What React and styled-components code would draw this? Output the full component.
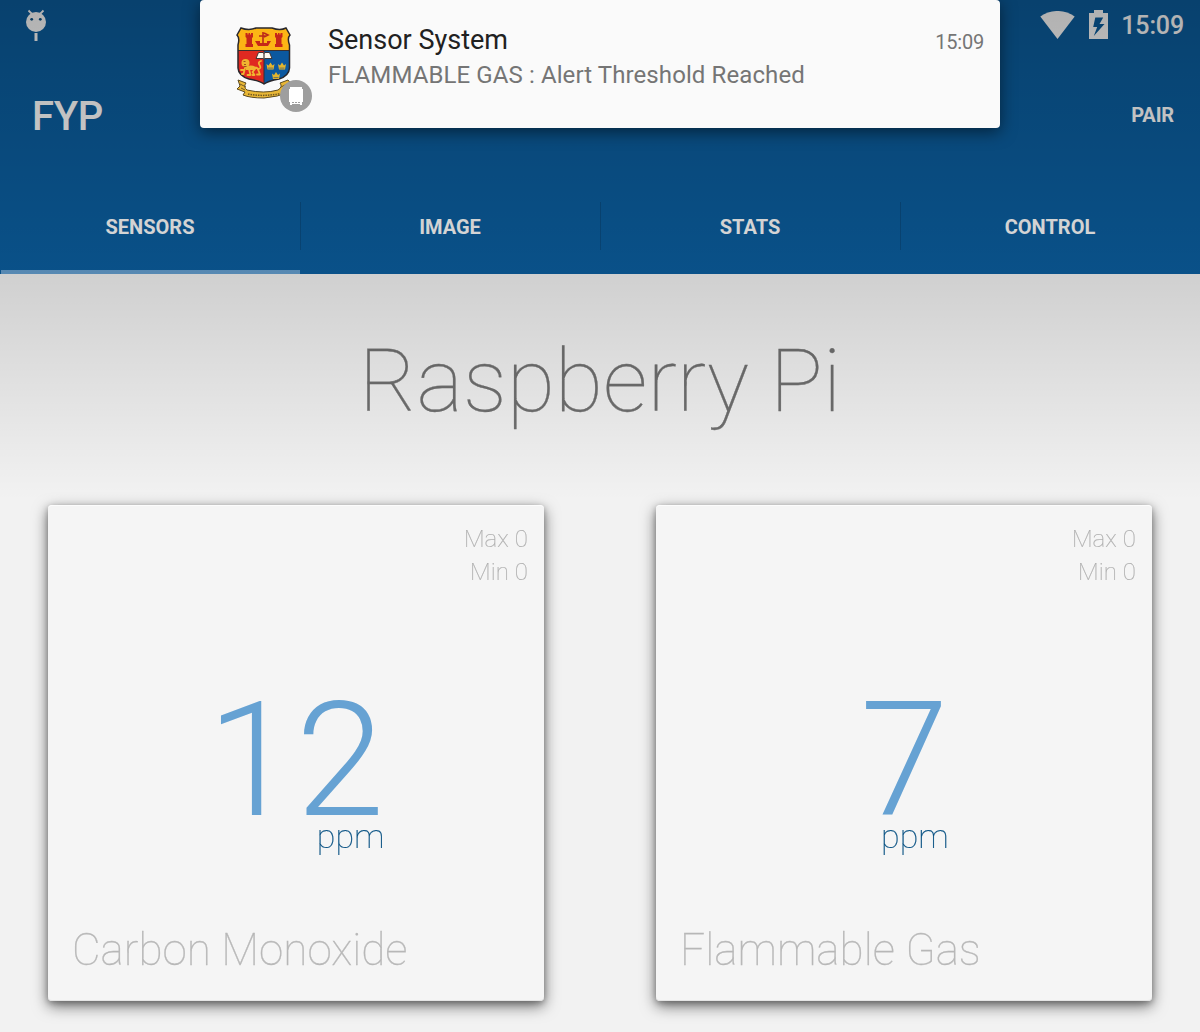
import React from "react";
import styled, { createGlobalStyle } from "styled-components";

const Global = createGlobalStyle`
  *, *::before, *::after { box-sizing: border-box; }
  body { margin: 0; background: #f2f2f2; font-family: Roboto, "Liberation Sans", sans-serif; }
`;

const Screen = styled.div`
  position: relative;
  width: 1200px;
  height: 1032px;
  overflow: hidden;
  display: flex;
  flex-direction: column;
`;

const Header = styled.header`
  height: 274px;
  display: flex;
  flex-direction: column;
  background: #0b5e9f;
  color: #fff;
`;

const StatusBar = styled.div`
  height: 50px;
  padding: 0 16px 0 24px;
  display: flex;
  align-items: center;
  justify-content: space-between;
`;

const StatusIcons = styled.div`
  display: flex;
  align-items: center;
`;

const StatusIcon = styled.svg`
  display: block;
  width: ${(p) => p.$w}px;
  height: ${(p) => p.$h}px;
  margin-right: ${(p) => p.$gap || 0}px;
  margin-bottom: ${(p) => p.$lift || 0}px;
`;

const Clock = styled.span`
  font-size: 25px;
  font-weight: 500;
  line-height: 32px;
  letter-spacing: -0.15px;
  padding-top: 2px;
`;

const AppBar = styled.div`
  height: 130px;
  padding: 0 26px 0 32px;
  display: flex;
  align-items: center;
  justify-content: space-between;
`;

const AppTitle = styled.h1`
  margin: 4px 0 0;
  font-size: 40px;
  font-weight: 500;
  line-height: 48px;
  letter-spacing: -0.3px;
`;

const Action = styled.span`
  font-size: 20px;
  font-weight: 700;
  line-height: 24px;
  letter-spacing: -0.15px;
`;

const Tabs = styled.nav`
  height: 94px;
  display: grid;
  grid-template-columns: repeat(4, 1fr);
`;

const Tab = styled.div`
  display: flex;
  align-items: flex-start;
  border-bottom: 4px solid ${(p) => (p.$active ? "#659fd0" : "transparent")};
  margin-left: ${(p) => (p.$active ? 1 : 0)}px;
`;

const TabLabel = styled.span`
  flex: 1;
  height: 48px;
  margin-top: 22px;
  padding-right: 1px;
  line-height: 50px;
  text-align: center;
  font-size: 20px;
  font-weight: 700;
  border-left: ${(p) => (p.$divider ? "1px solid #0a4f86" : "0")};
`;

const Body = styled.main`
  flex: 1;
  display: flex;
  flex-direction: column;
`;

const Title = styled.h2`
  margin: 0;
  height: 231px;
  padding-top: 54px;
  text-align: center;
  font-size: 88px;
  font-weight: 100;
  line-height: 106px;
  color: #707070;
  -webkit-text-stroke: 0.3px #707070;
`;

const Cards = styled.div`
  display: grid;
  grid-template-columns: 496px 496px;
  justify-content: space-between;
  padding: 0 48px;
`;

const Card = styled.section`
  height: 496px;
  border-radius: 4px;
  background: #f5f5f5;
  box-shadow: 0 5px 15px rgba(0, 0, 0, 0.55), 0 2px 6px rgba(0, 0, 0, 0.28), inset 0 1px 0 #fcfcfc,
    inset 0 -1px 0 #e4e4e4;
  display: flex;
  flex-direction: column;
`;

const Limits = styled.div`
  height: 170px;
  padding: 18px 16px 0;
  text-align: right;
  font-size: 24px;
  font-weight: 100;
  line-height: 33px;
  letter-spacing: 0.1px;
  color: #b0b0b0;
  -webkit-text-stroke: 0.2px #b0b0b0;
  will-change: transform;
`;

const Reading = styled.div`
  height: 188px;
  align-self: center;
  display: flex;
  flex-direction: column;
  align-items: flex-end;
  will-change: transform;
`;

const Value = styled.div`
  height: 141px;
  line-height: 172px;
  font-size: 160px;
  font-weight: 300;
  color: #66a2d3;
`;

const Unit = styled.div`
  font-size: 34px;
  font-weight: 100;
  line-height: 40px;
  color: #0b5384;
  -webkit-text-stroke: 0.2px #0b5384;
`;

const SensorName = styled.div`
  margin-top: 60px;
  padding-left: 24px;
  font-size: 44px;
  font-weight: 100;
  line-height: 54px;
  color: #b8b8b8;
  -webkit-text-stroke: 0.3px #b8b8b8;
  will-change: transform;
`;

const Scrim = styled.div`
  position: absolute;
  inset: 0 0 auto 0;
  height: 500px;
  background: linear-gradient(rgba(0, 0, 0, 0.31), rgba(0, 0, 0, 0.14) 274px, rgba(0, 0, 0, 0));
  pointer-events: none;
`;

const Notification = styled.aside`
  position: absolute;
  top: 0;
  left: 200px;
  width: 800px;
  height: 128px;
  padding: 0 16px 0 32px;
  display: flex;
  border-radius: 4px;
  background: #fafafa;
  box-shadow: 0 4px 16px rgba(0, 0, 0, 0.5);
`;

const NoticeIcon = styled.svg`
  flex: none;
  width: 96px;
  height: 128px;
`;

const NoticeText = styled.div`
  flex: 1;
  padding-top: 24px;
`;

const NoticeTitle = styled.div`
  font-size: 27px;
  line-height: 32px;
  color: #212121;
`;

const NoticeBody = styled.div`
  padding-top: 3px;
  font-size: 24px;
  line-height: 32px;
  letter-spacing: 0.1px;
  color: #757575;
`;

const NoticeTime = styled.span`
  padding-top: 30px;
  font-size: 20px;
  line-height: 24px;
  letter-spacing: -0.2px;
  color: #757575;
`;

const DebugIcon = () => (
  <StatusIcon $w={24} $h={34} viewBox="0 0 24 34">
    <path d="M4.5 2.5 8 6M19.5 2.5 16 6" stroke="#fff" strokeWidth="1.8" />
    <circle cx="12" cy="14" r="10" fill="#fff" />
    <path d="M10.5 25h3v8h-3z" fill="#fff" />
    <circle cx="7.7" cy="11.3" r="1.4" fill="#0b5285" />
    <circle cx="16.3" cy="11.3" r="1.4" fill="#0b5285" />
  </StatusIcon>
);

const WifiIcon = () => (
  <StatusIcon $w={35} $h={28} $gap={14} viewBox="0 0 35 28">
    <path d="M.3 5.6C10.5-1.9 24.5-1.9 34.7 5.6L17.5 28Z" fill="#fff" />
  </StatusIcon>
);

const BatteryIcon = () => (
  <StatusIcon $w={19} $h={29} $gap={13} $lift={2} viewBox="0 0 19 29">
    <path
      fill="#fff"
      fillRule="evenodd"
      d="M5 0h9v3h5v26H0V3h5zM6.300 7.500 4.200 17h4L4.800 26 15.500 14h-5l3.700-6.500z"
    />
  </StatusIcon>
);

const Tower = ({ x }) => (
  <path
    transform={`translate(${x} 33)`}
    fill="#c62719"
    d="M0 0h2v1.500h1V0h1.500v1.500h1V0H7.500v4l-1 1v6h1v3H0v-3h1V5L0 4z"
  />
);

const Crown = ({ x, y }) => (
  <g transform={`translate(${x} ${y})`} fill="#e4b52c">
    <path d="M0 1.500 2 3 4 0 6 3 8 1.500 7 7H1z" />
    <path d="M1.500 5.600h5" stroke="#345777" strokeWidth=".7" />
  </g>
);

const SHIELD =
  "M9 28Q17 31 24 28H40Q48 31 54 28L58 35Q55 38 57.500 45V68Q57 76 47 79Q36 81 32 84Q28 81 17 79Q6.500 76 6 68V45Q8 38 5 35Z";

const Crest = () => (
  <NoticeIcon viewBox="0 0 96 128">
    <clipPath id="shield">
      <path d={SHIELD} />
    </clipPath>
    <g clipPath="url(#shield)">
      <path d="M4 26h56v25H4z" fill="#fcb515" />
      <path d="M4 50.500h28V86H4z" fill="#df2921" />
      <path d="M32 50.500h28V86H32z" fill="#0b58a0" />
      <path d="M4 50.500h56M32 50v36" stroke="#392e30" strokeWidth="1" />
    </g>
    <path d={SHIELD} fill="none" stroke="#29272b" strokeWidth="1.500" />
    <Tower x={13.5} />
    <Tower x={43} />
    <path d="M23 41h5v2h7v-2h4l-3 5H26z" fill="#c62719" />
    <path d="M31 32v12M27 36h7M32 33l4 2-4 2" fill="none" stroke="#bb281a" strokeWidth="1.600" />
    <path d="M26.500 52.500h4.500l1 1 1-1h4.500l2.500 6h-7l-1 .8-1-.8h-7z" fill="#fffaf0" stroke="#413737" strokeWidth="1" />
    <path d="M32 53v6" stroke="#413737" strokeWidth="1.200" />
    <g fill="none" stroke="#f0b630" strokeWidth="1.800" strokeLinejoin="round" strokeLinecap="round">
      <path d="M14 67.500q5-2 9 0 3 0 3.500 3l1.500 4h-3M13 68l-1.500 6H10M17 69l1.500 6h-3M23 69l-2.500 3 2 3h-2M27 69q2.500-1 .5-4t1.500-4M12 70l-3 0" />
    </g>
    <circle cx="13.500" cy="63" r="4" fill="#f0b630" />
    <path d="M14 68.500h9" stroke="#f0b630" strokeWidth="3" />
    <path d="M11.500 61.500h2M12 64.500h2M11.500 66.500h3" stroke="#8c381d" strokeWidth=".8" />
    <Crown x={34.5} y={62.5} />
    <Crown x={46} y={62.5} />
    <Crown x={40} y={72} />
    <path
      d="M6 80 14 83Q11 87 15 90Q32 94 46 90Q51 87 48 83L56 80 60 85 55 87 57 92Q46 97 32 98Q18 98 11 95L13 92 5 89 8 86Z"
      fill="#e9b735"
      stroke="#5b4a22"
      strokeWidth="1"
      strokeLinejoin="round"
    />
    <path d="M16 94Q32 97 48 93.500" fill="none" stroke="#705821" strokeWidth="1.500" strokeDasharray="1.500 1" />
    <path d="m8 84 6 3m-5 1 4 2M49 87l6-3" stroke="#705821" strokeWidth="1" />
    <circle cx="64" cy="96" r="16" fill="#9e9e9e" />
    <path d="M58 87h12v2h1v13h-1v3h-2v-1h-8v1h-2v-3h-1V89h1z" fill="#fff" />
    <path d="M60 102.500h2m1 0h2m1 0h2" stroke="#9e9e9e" strokeWidth="1" />
  </NoticeIcon>
);

const TABS = ["SENSORS", "IMAGE", "STATS", "CONTROL"];
const SENSORS = [
  { name: "Carbon Monoxide", value: 12 },
  { name: "Flammable Gas", value: 7 },
];

export default function App() {
  return (
    <Screen>
      <Global />
      <Header>
        <StatusBar>
          <DebugIcon />
          <StatusIcons>
            <WifiIcon />
            <BatteryIcon />
            <Clock>15:09</Clock>
          </StatusIcons>
        </StatusBar>
        <AppBar>
          <AppTitle>FYP</AppTitle>
          <Action>PAIR</Action>
        </AppBar>
        <Tabs>
          {TABS.map((label, i) => (
            <Tab key={label} $active={i === 0}>
              <TabLabel $divider={i > 0}>{label}</TabLabel>
            </Tab>
          ))}
        </Tabs>
      </Header>
      <Body>
        <Title>Raspberry Pi</Title>
        <Cards>
          {SENSORS.map((s) => (
            <Card key={s.name}>
              <Limits>
                <div>Max 0</div>
                <div>Min 0</div>
              </Limits>
              <Reading>
                <Value>{s.value}</Value>
                <Unit>ppm</Unit>
              </Reading>
              <SensorName>{s.name}</SensorName>
            </Card>
          ))}
        </Cards>
      </Body>
      <Scrim />
      <Notification>
        <Crest />
        <NoticeText>
          <NoticeTitle>Sensor System</NoticeTitle>
          <NoticeBody>FLAMMABLE GAS : Alert Threshold Reached</NoticeBody>
        </NoticeText>
        <NoticeTime>15:09</NoticeTime>
      </Notification>
    </Screen>
  );
}
